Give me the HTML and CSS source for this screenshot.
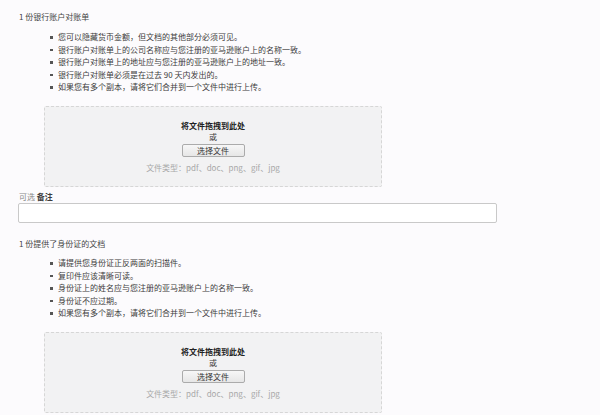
FILE: index.html
```html
<!DOCTYPE html>
<html lang="zh-CN">
<head>
  <meta charset="UTF-8" />
  <title>上传文件</title>
  <link rel="stylesheet" href="styles.css">
</head>
<body>
  <!-- Bank statement -->
  <div class="doc">
    <h3 class="doc-title">1 份银行账户对账单</h3>
    <ul class="reqs">
      <li>您可以隐藏货币金额，但文档的其他部分必须可见。</li>
      <li>银行账户对账单上的公司名称应与您注册的亚马逊账户上的名称一致。</li>
      <li>银行账户对账单上的地址应与您注册的亚马逊账户上的地址一致。</li>
      <li>银行账户对账单必须是在过去 90 天内发出的。</li>
      <li>如果您有多个副本，请将它们合并到一个文件中进行上传。</li>
    </ul>
    <div class="dropzone">
      <div class="drop-title">将文件拖拽到此处</div>
      <div class="drop-or">或</div>
      <button class="pick">选择文件</button>
      <div class="drop-types">文件类型：pdf、doc、png、gif、jpg</div>
    </div>
  </div>

  <!-- Note -->
  <div class="note">
    <label class="note-label"><span class="optional">可选</span> <b>备注</b></label>
    <input type="text" class="note-input" />
  </div>

  <!-- ID document -->
  <div class="doc doc-id">
    <h3 class="doc-title">1 份提供了身份证的文档</h3>
    <ul class="reqs">
      <li>请提供您身份证正反两面的扫描件。</li>
      <li>复印件应该清晰可读。</li>
      <li>身份证上的姓名应与您注册的亚马逊账户上的名称一致。</li>
      <li>身份证不应过期。</li>
      <li>如果您有多个副本，请将它们合并到一个文件中进行上传。</li>
    </ul>
    <div class="dropzone">
      <div class="drop-title">将文件拖拽到此处</div>
      <div class="drop-or">或</div>
      <button class="pick">选择文件</button>
      <div class="drop-types">文件类型：pdf、doc、png、gif、jpg</div>
    </div>
  </div>
</body>
</html>
```

FILE: styles.css
```css
* {
  margin: 0;
  padding: 0;
  box-sizing: border-box;
}
body {
  font-family: 'Noto Sans CJK SC', 'Liberation Sans', sans-serif;
  font-size: 8px;
  color: #3c3c3c;
  background: #fcfbfd;
  padding: 11px 18px 0 19px;
  height: 415px;
  overflow: hidden;
}
.doc-title {
  font-size: 8px;
  font-weight: normal;
  line-height: 12px;
  color: #444;
}
.reqs {
  list-style: none;
  margin-top: 8px;
  padding-left: 31px;
}
.reqs li {
  line-height: 12.5px;
  display: flex;
  align-items: center;
}
.reqs li::before {
  content: "";
  width: 2.5px;
  height: 2.5px;
  background: #555;
  margin-right: 5.5px;
  flex-shrink: 0;
}

/* Drop zone */
.dropzone {
  margin: 12.5px 0 0 25px;
  width: 338px;
  height: 81px;
  background: #f2f2f3;
  border: 1px dashed #d6d6d6;
  border-radius: 2px;
  display: flex;
  flex-direction: column;
  align-items: center;
  justify-content: center;
}
.drop-title {
  font-weight: bold;
  line-height: 11px;
  color: #222;
}
.drop-or {
  line-height: 11px;
}
.pick {
  margin-top: 1.5px;
  width: 63px;
  height: 13px;
  font-family: inherit;
  font-size: 8px;
  line-height: 11px;
  color: #333;
  background: linear-gradient(to bottom, #f7f7f7, #e6e6e6);
  border: 1px solid #ababab;
  border-radius: 2px;
}
.drop-types {
  margin-top: 5.5px;
  line-height: 11px;
  color: #a8a8a8;
}

/* Note */
.note {
  margin-top: 4px;
}
.note-label {
  display: block;
  line-height: 12px;
}
.optional {
  color: #888;
}
.note-input {
  display: block;
  width: 479px;
  height: 20px;
  margin-left: -1px;
  border: 1px solid #c9c9c9;
  border-radius: 2px;
  background: #fff;
}

.doc-id {
  margin-top: 15px;
}
.doc-id .reqs {
  margin-top: 7px;
}
```
